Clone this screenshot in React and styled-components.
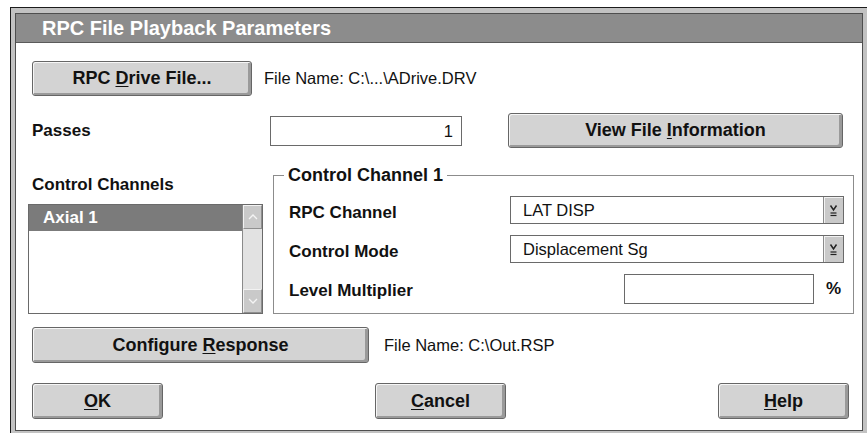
import styled, { createGlobalStyle } from "styled-components"

const GlobalStyle = createGlobalStyle`
  html, body { margin: 0; padding: 0; background: #ffffff; }
  body { font-family: "Liberation Sans", Arial, sans-serif; overflow: hidden; color: #111; }
`

export default function App() {
    return (
        <>
            <GlobalStyle />
            <StyledJanela>
                <StyledInterno>
                    <StyledTitulo>RPC File Playback Parameters</StyledTitulo>
                    <StyledConteudo>
                        <StyledLinha>
                            <StyledBotao largura={220}>RPC <u>D</u>rive File...</StyledBotao>
                            <StyledTexto>File Name: C:\...\ADrive.DRV</StyledTexto>
                        </StyledLinha>

                        <StyledLinhaPasses>
                            <StyledRotulo largura={238}>Passes</StyledRotulo>
                            <StyledCampo largura={192} alinhar="right">1</StyledCampo>
                            <StyledBotao largura={335}>View File <u>I</u>nformation</StyledBotao>
                        </StyledLinhaPasses>

                        <StyledMeio>
                            <StyledColunaCanais>
                                <StyledRotulo>Control Channels</StyledRotulo>
                                <StyledLista>
                                    <StyledItens>
                                        <StyledItem selecionado>Axial 1</StyledItem>
                                    </StyledItens>
                                    <StyledRolagem>
                                        <StyledSeta>
                                            <svg width="10" height="6" viewBox="0 0 10 6">
                                                <polyline points="1,5 5,1 9,5" fill="none" stroke="#f4f4f4" strokeWidth="1.3" />
                                            </svg>
                                        </StyledSeta>
                                        <StyledSeta>
                                            <svg width="10" height="6" viewBox="0 0 10 6">
                                                <polyline points="1,1 5,5 9,1" fill="none" stroke="#f4f4f4" strokeWidth="1.3" />
                                            </svg>
                                        </StyledSeta>
                                    </StyledRolagem>
                                </StyledLista>
                            </StyledColunaCanais>

                            <StyledGrupo>
                                <legend>Control Channel 1</legend>
                                <StyledLinhaGrupo>
                                    <StyledRotuloGrupo>RPC Channel</StyledRotuloGrupo>
                                    <StyledSelect>
                                        <span>LAT DISP</span>
                                        <BotaoSelect />
                                    </StyledSelect>
                                </StyledLinhaGrupo>
                                <StyledLinhaGrupo>
                                    <StyledRotuloGrupo>Control Mode</StyledRotuloGrupo>
                                    <StyledSelect>
                                        <span>Displacement Sg</span>
                                        <BotaoSelect />
                                    </StyledSelect>
                                </StyledLinhaGrupo>
                                <StyledLinhaGrupo>
                                    <StyledRotuloGrupo>Level Multiplier</StyledRotuloGrupo>
                                    <StyledCampo largura={190} altura={30} className="multiplicador" />
                                    <StyledPorcento>%</StyledPorcento>
                                </StyledLinhaGrupo>
                            </StyledGrupo>
                        </StyledMeio>

                        <StyledLinhaResposta>
                            <StyledBotao largura={337} altura={36}>Configure <u>R</u>esponse</StyledBotao>
                            <StyledTexto>File Name: C:\Out.RSP</StyledTexto>
                        </StyledLinhaResposta>

                        <StyledRodape>
                            <StyledBotao largura={131} altura={36}><u>O</u>K</StyledBotao>
                            <StyledBotao largura={131} altura={36}><u>C</u>ancel</StyledBotao>
                            <StyledBotao largura={131} altura={36}><u>H</u>elp</StyledBotao>
                        </StyledRodape>
                    </StyledConteudo>
                </StyledInterno>
            </StyledJanela>
        </>
    )
}

function BotaoSelect() {
    return (
        <StyledSetaSelect>
            <svg width="9" height="13" viewBox="0 0 9 13">
                <polyline points="1.5,1.5 4.5,6 7.5,1.5" fill="none" stroke="#222" strokeWidth="1.5" />
                <line x1="1.5" y1="9" x2="7.5" y2="9" stroke="#222" strokeWidth="1.2" />
                <line x1="1.5" y1="11.5" x2="7.5" y2="11.5" stroke="#222" strokeWidth="1.2" />
            </svg>
        </StyledSetaSelect>
    )
}

const StyledJanela = styled.div`
    margin: 7px 0 0 10px;
    width: 858px;
    box-sizing: border-box;
    border: 1px solid #1c1c1c;
    background-color: #c2c2c2;
    padding: 5px 4px 4px 4px;
`

const StyledInterno = styled.div`
    border: 1px solid #4e4e4e;
    background-color: #ffffff;
`

const StyledTitulo = styled.div`
    height: 28px;
    line-height: 28px;
    background-color: #8c8c8c;
    border-bottom: 1px solid #5a5a5a;
    color: #ffffff;
    font-size: 20px;
    font-weight: bold;
    padding-left: 26px;
`

const StyledConteudo = styled.div`
    padding: 18px 0 11px 16px;
`

const StyledLinha = styled.div`
    display: flex;
    align-items: center;
    gap: 12px;
`

const StyledLinhaPasses = styled.div`
    display: flex;
    align-items: center;
    margin-top: 17px;
    button{
        margin-left: 46px;
    }
`

const StyledLinhaResposta = styled.div`
    display: flex;
    align-items: center;
    gap: 15px;
    margin-top: 13px;
`

const StyledRodape = styled.div`
    display: flex;
    justify-content: space-between;
    margin-top: 20px;
    padding-right: 13px;
`

const StyledBotao = styled.button`
    width: ${props => props.largura}px;
    height: ${props => props.altura || 35}px;
    box-sizing: border-box;
    padding: 0;
    background-color: #d3d3d3;
    border: 1px solid #666666;
    border-radius: 3px;
    box-shadow: inset 1px 1px 0 #f6f6f6, inset -3px -2px 0 #9a9a9a;
    font-family: "Liberation Sans", Arial, sans-serif;
    font-size: 18px;
    font-weight: bold;
    color: #111111;
    u{
        text-decoration-thickness: 1px;
        text-underline-offset: 2px;
    }
`

const StyledTexto = styled.span`
    font-size: 16.5px;
    color: #111111;
`

const StyledRotulo = styled.div`
    width: ${props => props.largura ? props.largura + "px" : "auto"};
    font-size: 17px;
    font-weight: bold;
    line-height: 20px;
`

const StyledCampo = styled.div`
    width: ${props => props.largura}px;
    height: ${props => props.altura || 30}px;
    box-sizing: border-box;
    border: 1px solid #6a6a6a;
    background-color: #ffffff;
    font-size: 16.5px;
    line-height: 28px;
    text-align: ${props => props.alinhar || "left"};
    padding: 0 8px;
    &.multiplicador{
        margin-left: auto;
    }
`

const StyledMeio = styled.div`
    display: flex;
    align-items: flex-start;
    margin-top: 17px;
`

const StyledColunaCanais = styled.div`
    width: 231px;
    padding-top: 10px;
`

const StyledLista = styled.div`
    display: flex;
    width: 235px;
    height: 110px;
    box-sizing: border-box;
    margin-left: -4px;
    margin-top: 9px;
    border: 1px solid #6a6a6a;
    background-color: #ffffff;
`

const StyledItens = styled.div`
    flex: 1;
`

const StyledItem = styled.div`
    height: 26px;
    line-height: 26px;
    padding-left: 14px;
    background-color: ${props => props.selecionado ? "#7b7b7b" : "transparent"};
    color: ${props => props.selecionado ? "#ffffff" : "#111111"};
    font-size: 17px;
    font-weight: bold;
`

const StyledRolagem = styled.div`
    width: 19px;
    display: flex;
    flex-direction: column;
    justify-content: space-between;
    background-color: #e2e2e2;
    border-left: 1px solid #8a8a8a;
`

const StyledSeta = styled.div`
    height: 24px;
    box-sizing: border-box;
    display: flex;
    align-items: center;
    justify-content: center;
    background-color: #c9c9c9;
    border-top: 1px solid #f2f2f2;
    border-left: 1px solid #f2f2f2;
    border-bottom: 1px solid #8f8f8f;
    border-right: 1px solid #8f8f8f;
`

const StyledGrupo = styled.fieldset`
    width: 581px;
    box-sizing: border-box;
    margin: 0 0 0 10px;
    padding: 11px 9px 11px 10px;
    border: 1px solid #8c8c8c;
    min-inline-size: 0;
    legend{
        padding: 0 4px;
        font-size: 18px;
        font-weight: bold;
        line-height: 20px;
    }
    & > div + div{
        margin-top: 11px;
    }
`

const StyledLinhaGrupo = styled.div`
    display: flex;
    align-items: flex-start;
    height: 28px;
`

const StyledRotuloGrupo = styled.div`
    width: 226px;
    box-sizing: border-box;
    padding-left: 5px;
    padding-top: 3px;
    font-size: 17px;
    font-weight: bold;
    line-height: 28px;
`

const StyledSelect = styled.div`
    display: flex;
    width: 334px;
    height: 28px;
    box-sizing: border-box;
    border: 1px solid #6a6a6a;
    background-color: #ffffff;
    span{
        flex: 1;
        padding-left: 12px;
        font-size: 16.5px;
        line-height: 26px;
    }
`

const StyledSetaSelect = styled.div`
    width: 20px;
    box-sizing: border-box;
    display: flex;
    align-items: center;
    justify-content: center;
    background-color: #c9c9c9;
    border-left: 1px solid #8a8a8a;
    box-shadow: inset 1px 1px 0 #f2f2f2;
`

const StyledPorcento = styled.div`
    width: 30px;
    box-sizing: border-box;
    padding-left: 12px;
    font-size: 17px;
    font-weight: bold;
    line-height: 30px;
`
